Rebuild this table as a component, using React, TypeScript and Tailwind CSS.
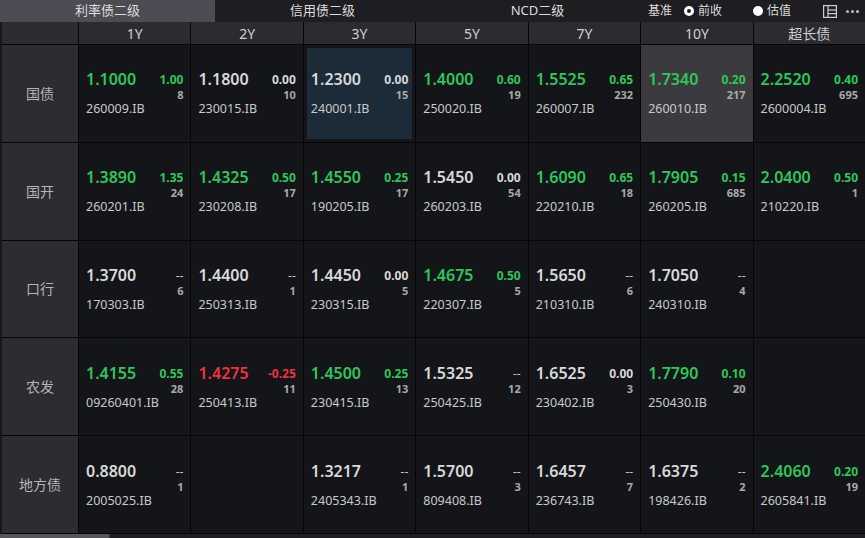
import React from "react";

type Tone = "g" | "r" | "w";
type Quote = {
  price: string;
  chg: string;
  cnt: string;
  code: string;
  tone: Tone;
  mark?: "blue" | "gray";
};

const cols = ["1Y", "2Y", "3Y", "5Y", "7Y", "10Y", "超长债"];

const q = (price: string, tone: Tone, chg: string, cnt: string, code: string, mark?: "blue" | "gray"): Quote => ({
  price,
  tone,
  chg,
  cnt,
  code,
  mark,
});

const rows: { name: string; cells: (Quote | null)[] }[] = [
  {
    name: "国债",
    cells: [
      q("1.1000", "g", "1.00", "8", "260009.IB"),
      q("1.1800", "w", "0.00", "10", "230015.IB"),
      q("1.2300", "w", "0.00", "15", "240001.IB", "blue"),
      q("1.4000", "g", "0.60", "19", "250020.IB"),
      q("1.5525", "g", "0.65", "232", "260007.IB"),
      q("1.7340", "g", "0.20", "217", "260010.IB", "gray"),
      q("2.2520", "g", "0.40", "695", "2600004.IB"),
    ],
  },
  {
    name: "国开",
    cells: [
      q("1.3890", "g", "1.35", "24", "260201.IB"),
      q("1.4325", "g", "0.50", "17", "230208.IB"),
      q("1.4550", "g", "0.25", "17", "190205.IB"),
      q("1.5450", "w", "0.00", "54", "260203.IB"),
      q("1.6090", "g", "0.65", "18", "220210.IB"),
      q("1.7905", "g", "0.15", "685", "260205.IB"),
      q("2.0400", "g", "0.50", "1", "210220.IB"),
    ],
  },
  {
    name: "口行",
    cells: [
      q("1.3700", "w", "--", "6", "170303.IB"),
      q("1.4400", "w", "--", "1", "250313.IB"),
      q("1.4450", "w", "0.00", "5", "230315.IB"),
      q("1.4675", "g", "0.50", "5", "220307.IB"),
      q("1.5650", "w", "--", "6", "210310.IB"),
      q("1.7050", "w", "--", "4", "240310.IB"),
      null,
    ],
  },
  {
    name: "农发",
    cells: [
      q("1.4155", "g", "0.55", "28", "09260401.IB"),
      q("1.4275", "r", "-0.25", "11", "250413.IB"),
      q("1.4500", "g", "0.25", "13", "230415.IB"),
      q("1.5325", "w", "--", "12", "250425.IB"),
      q("1.6525", "w", "0.00", "3", "230402.IB"),
      q("1.7790", "g", "0.10", "20", "250430.IB"),
      null,
    ],
  },
  {
    name: "地方债",
    cells: [
      q("0.8800", "w", "--", "1", "2005025.IB"),
      null,
      q("1.3217", "w", "--", "1", "2405343.IB"),
      q("1.5700", "w", "--", "3", "809408.IB"),
      q("1.6457", "w", "--", "7", "236743.IB"),
      q("1.6375", "w", "--", "2", "198426.IB"),
      q("2.4060", "g", "0.20", "19", "2605841.IB"),
    ],
  },
];

const toneText: Record<Tone, string> = {
  g: "text-[#2fc65a]",
  r: "text-[#f0323e]",
  w: "text-[#d9d9d9]",
};

function Cell({ d }: { d: Quote | null }) {
  if (!d) return <div className="bg-[#131519]" />;
  const wrap = d.mark === "gray" ? "bg-[#3b3b3f]" : "bg-[#131519]";
  const inner = d.mark === "blue" ? "bg-[#1b2b37] m-[3px] px-[4px]" : "px-[7px]";
  const chgCls =
    d.chg === "--" ? "text-[#c4c4c4] font-normal" : `${toneText[d.tone]} font-bold`;
  return (
    <div className={`${wrap} flex`}>
      <div className={`${inner} flex flex-1 flex-col justify-center`}>
        <div className="flex items-start justify-between">
          <span className={`${toneText[d.tone]} text-[16px] leading-[20px] font-semibold`}>{d.price}</span>
          <div className="flex flex-col items-end pt-[3px]">
            <span className={`${chgCls} text-[12px] leading-[15px]`}>{d.chg}</span>
            <span className="text-[11px] leading-[16px] font-bold text-[#a9a9a9]">{d.cnt}</span>
          </div>
        </div>
        <div className="text-[12.5px] leading-[16px] text-[#c9c9c9] -mt-[2px]">{d.code}</div>
      </div>
    </div>
  );
}

export default function App() {
  return (
    <div
      className="w-[865px] h-[538px] overflow-hidden bg-[#1c1c20] flex flex-col select-none"
      style={{ fontFamily: '"Noto Sans", "Noto Sans CJK SC", sans-serif' }}
    >
      {/* tabs */}
      <div className="h-[22px] flex items-stretch bg-[#1e1e22] text-[13px] text-[#dcdcdc]">
        <div className="w-[215px] bg-[#4c4c54] flex items-center justify-center">利率债二级</div>
        <div className="w-[215px] flex items-center justify-center">信用债二级</div>
        <div className="w-[215px] flex items-center justify-center">NCD二级</div>
        <div className="flex-1 flex items-center pl-[3px] text-[12px]">
          <span>基准</span>
          <span className="ml-[12px] w-[10px] h-[10px] rounded-full bg-white flex items-center justify-center">
            <span className="w-[4px] h-[4px] rounded-full bg-[#1e1e22]" />
          </span>
          <span className="ml-[4px]">前收</span>
          <span className="ml-[31px] w-[10px] h-[10px] rounded-full bg-white" />
          <span className="ml-[4px]">估值</span>
          <svg className="ml-[32px]" width="14" height="13" viewBox="0 0 14 13" fill="none" stroke="#cfcfcf" strokeWidth="1.2">
            <rect x="0.6" y="0.6" width="12.8" height="11.8" />
            <line x1="5" y1="0.6" x2="5" y2="12.4" />
            <line x1="5" y1="5" x2="13.4" y2="5" />
            <line x1="5" y1="8.6" x2="13.4" y2="8.6" />
          </svg>
          <span className="ml-[9px] flex gap-[2px]">
            <span className="w-[3px] h-[3px] rounded-full bg-[#bdbdbd]" />
            <span className="w-[3px] h-[3px] rounded-full bg-[#bdbdbd]" />
            <span className="w-[3px] h-[3px] rounded-full bg-[#bdbdbd]" />
          </span>
        </div>
      </div>

      {/* grid */}
      <div className="flex-1 flex flex-col min-h-0">
        <div className="flex-1 flex min-h-0">
          <div className="w-[2px] bg-[#18181b]" />
          <div className="flex-1 grid grid-cols-[76px_repeat(7,1fr)] grid-rows-[22px_repeat(5,1fr)] gap-px bg-[#050505] pb-px">
            <div className="bg-[#2b2b30]" />
            {cols.map((c) => (
              <div key={c} className="bg-[#2b2b30] flex items-center justify-center text-[14px] text-[#d0d0d0]">
                {c}
              </div>
            ))}
            {rows.map((r) => (
              <React.Fragment key={r.name}>
                <div className="bg-[#2c2c31] flex items-center justify-center text-[14px] text-[#b5b5b5]">
                  {r.name}
                </div>
                {r.cells.map((d, i) => (
                  <Cell key={i} d={d} />
                ))}
              </React.Fragment>
            ))}
          </div>
        </div>
        {/* scrollbar */}
        <div className="h-[4px] bg-[#1f1f23] flex">
          <div className="w-[110px] bg-[#55555b] rounded-r-[2px]" />
        </div>
      </div>
    </div>
  );
}
